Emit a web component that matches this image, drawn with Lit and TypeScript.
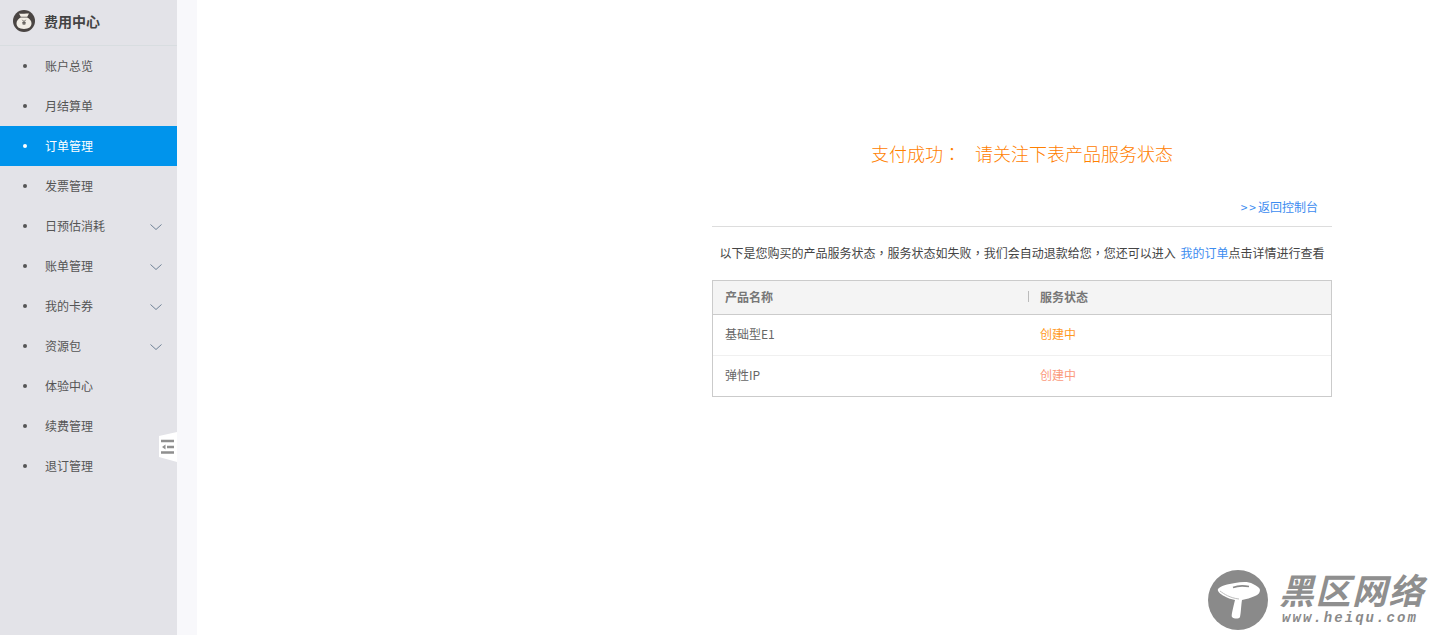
import { LitElement, html, css, svg } from "lit";
import { customElement } from "lit/decorators.js";

const items: [string, boolean, boolean][] = [
  ["账户总览", false, false],
  ["月结算单", false, false],
  ["订单管理", true, false],
  ["发票管理", false, false],
  ["日预估消耗", false, true],
  ["账单管理", false, true],
  ["我的卡券", false, true],
  ["资源包", false, true],
  ["体验中心", false, false],
  ["续费管理", false, false],
  ["退订管理", false, false],
];

const chevron = svg`<svg class="chev" width="12" height="6" viewBox="0 0 12 6"><path d="M.5.5 6 5.500 11.500.5" fill="none" stroke="#6f8296" stroke-width="1"/></svg>`;

@customElement("app-root")
export class AppRoot extends LitElement {
  static styles = css`
    :host {
      display: flex;
      height: 635px;
      overflow: hidden;
      position: relative;
      background: #fff;
      font-family: "Noto Sans CJK SC", "Liberation Sans", sans-serif;
      font-size: 12px;
      color: #444;
    }
    .side {
      width: 177px;
      flex: none;
      background: #e3e3e8;
      position: relative;
    }
    .head {
      height: 45px;
      border-bottom: 1px solid #d8dde0;
      display: flex;
      align-items: center;
      padding-left: 13px;
      gap: 9px;
      font-weight: 700;
      color: #444;
      font-size: 14px;
    }
    .head span {
      margin-bottom: 4px;
    }
    .head svg {
      margin-bottom: 3px;
    }
    .item {
      height: 40px;
      display: flex;
      align-items: center;
      padding-left: 23px;
      color: #555;
    }
    .item span {
      margin-bottom: 2px;
    }
    .item.on {
      background: #0094ec;
      color: #fff;
    }
    .dot {
      width: 4px;
      height: 4px;
      border-radius: 50%;
      background: #555;
      margin-right: 18px;
    }
    .on .dot {
      background: #fff;
    }
    .chev {
      margin-left: auto;
      margin-right: 15px;
      margin-top: 2px;
    }
    .toggle {
      position: absolute;
      left: 158px;
      top: 432px;
      width: 19px;
      height: 30px;
    }
    .strip {
      width: 20px;
      flex: none;
      background: #f8f8fb;
    }
    .main {
      flex: 1;
      padding: 141px 0 0 515px;
    }
    .box {
      width: 620px;
    }
    .title {
      font-size: 18px;
      line-height: 24px;
      font-weight: 300;
      color: #ff8000;
      display: flex;
      justify-content: center;
      gap: 14px;
    }
    .p {
      font-family: "Noto Sans CJK TC", sans-serif;
    }
    .back {
      margin-top: 30px;
      height: 31px;
      border-bottom: 1px solid #ddd;
      text-align: right;
      padding-right: 14px;
      line-height: 24px;
      color: #3c8cf0;
    }
    .back .arrows {
      letter-spacing: 2px;
    }
    .note {
      height: 53px;
      line-height: 51px;
      text-align: center;
      color: #444;
      white-space: nowrap;
      word-spacing: 2px;
    }
    .note b {
      font-weight: 400;
      color: #3c8cf0;
    }
    .table {
      border: 1px solid #cbcbcb;
      height: 115px;
    }
    .row {
      display: flex;
      align-items: center;
      height: 40px;
      padding-bottom: 3px;
      box-sizing: border-box;
      color: #666;
    }
    .row + .row {
      border-top: 1px solid #f0f0f0;
    }
    .row.th {
      height: 34px;
      padding-bottom: 2px;
      background: #f4f4f4;
      border-bottom: 1px solid #cbcbcb;
      font-weight: 700;
      color: #777;
    }
    .row.th + .row {
      border-top: 0;
    }
    .row.last {
      height: 41px;
    }
    .c1 {
      width: 316px;
      padding-left: 12px;
      box-sizing: border-box;
      position: relative;
    }
    .th .c1::after {
      content: "";
      position: absolute;
      right: 0;
      top: 3px;
      height: 11px;
      width: 1px;
      background: #bbb;
    }
    .c2 {
      padding-left: 11px;
    }
    .org {
      color: #ff9a1e;
    }
    .pink {
      color: #fb9a7c;
    }
    .mark {
      position: absolute;
      left: 1208px;
      top: 570px;
      width: 232px;
      height: 60px;
    }
    .mark svg {
      position: absolute;
      left: 0;
      top: 0;
    }
    .mark .cn {
      position: absolute;
      left: 71px;
      top: 1px;
      font: italic 700 35px/36px "Noto Sans CJK SC", sans-serif;
      letter-spacing: 1.500px;
      white-space: nowrap;
      color: #8f8f8f;
    }
    .mark .en {
      position: absolute;
      left: 74px;
      top: 39px;
      font: italic 700 14px/18px "Liberation Mono", monospace;
      letter-spacing: 2.050px;
      white-space: nowrap;
      color: #8a8a8a;
    }
  `;

  render() {
    return html`
      <aside class="side">
        <div class="head">
          <svg width="22" height="22" viewBox="0 0 22 22">
            <circle cx="11" cy="11" r="11" fill="#4a4543" />
            <path d="M6 3.500c1.500.5 3 .4 5 .2 2-.2 3.500-.2 5-.2L14 7.200c2.800 1.500 4.500 3.700 4.500 6.100 0 3.500-2.500 5.700-7.500 5.700S3.500 16.800 3.500 13.300c0-2.400 1.700-4.600 4.500-6.100Z" fill="#f2eee6"/>
            <path d="M7.500 7.200h7" stroke="#4a4543" stroke-width=".7" fill="none"/>
            <path d="M9.300 9.800 11 11.600l1.700-1.800M11 11.600v3.400M9.200 12.400h3.600M9.200 13.800h3.600" fill="none" stroke="#4a4543" stroke-width=".8"/>
          </svg>
          <span>费用中心</span>
        </div>
        ${items.map(
          ([t, on, sub]) => html`<div class="item ${on ? "on" : ""}">
            <i class="dot"></i><span>${t}</span>${sub ? chevron : ""}
          </div>`
        )}
        <svg class="toggle" viewBox="0 0 19 30">
          <path d="M19 0 1 4v21l18 5Z" fill="#fff"/>
          <path d="M3 9h13M9 15h7M3 20.500h13" stroke="#8f8f8f" stroke-width="2.500" fill="none"/>
          <path d="M7.500 12.500v5L4 15Z" fill="#8f8f8f"/>
        </svg>
      </aside>
      <div class="strip"></div>
      <main class="main">
        <div class="box">
          <div class="title"><span>支付成功<span class="p">：</span></span><span>请关注下表产品服务状态</span></div>
          <div class="back"><span class="arrows">&gt;&gt;</span>返回控制台</div>
          <div class="note">以下是您购买的产品服务状态<span class="p">，</span>服务状态如失败<span class="p">，</span>我们会自动退款给您<span class="p">，</span>您还可以进入 <b>我的订单</b>点击详情进行查看</div>
          <div class="table">
            <div class="row th"><div class="c1">产品名称</div><div class="c2">服务状态</div></div>
            <div class="row"><div class="c1">基础型E1</div><div class="c2 org">创建中</div></div>
            <div class="row last"><div class="c1">弹性IP</div><div class="c2 pink">创建中</div></div>
          </div>
        </div>
      </main>
      <div class="mark">
        <svg width="60" height="60" viewBox="0 0 60 60">
          <circle cx="30" cy="30" r="30" fill="#8a8a8a"/>
          <path d="M10 19c2-3 10-5 17-6 6-1 13-2 18 1 4 2 7 4 7 6 0 3-2 5-5 6-4 2-9 3-13 4-1 6-1 13-2 17-1 2-6 2-8 0-1-1 1-9 3-17-4-1-8-2-11-4-4-2-7-5-6-7Z" fill="#fff"/>
          <path d="M25 17.500c5-2 10-2 16-1" stroke="#8a8a8a" stroke-width="1.600" fill="none"/>
          <path d="M12 21c4 3 10 7 19 8" stroke="#bdbdbd" stroke-width="1" fill="none"/>
        </svg>
        <div class="cn">黑区网络</div>
        <div class="en">www.heiqu.com</div>
      </div>
    `;
  }
}
